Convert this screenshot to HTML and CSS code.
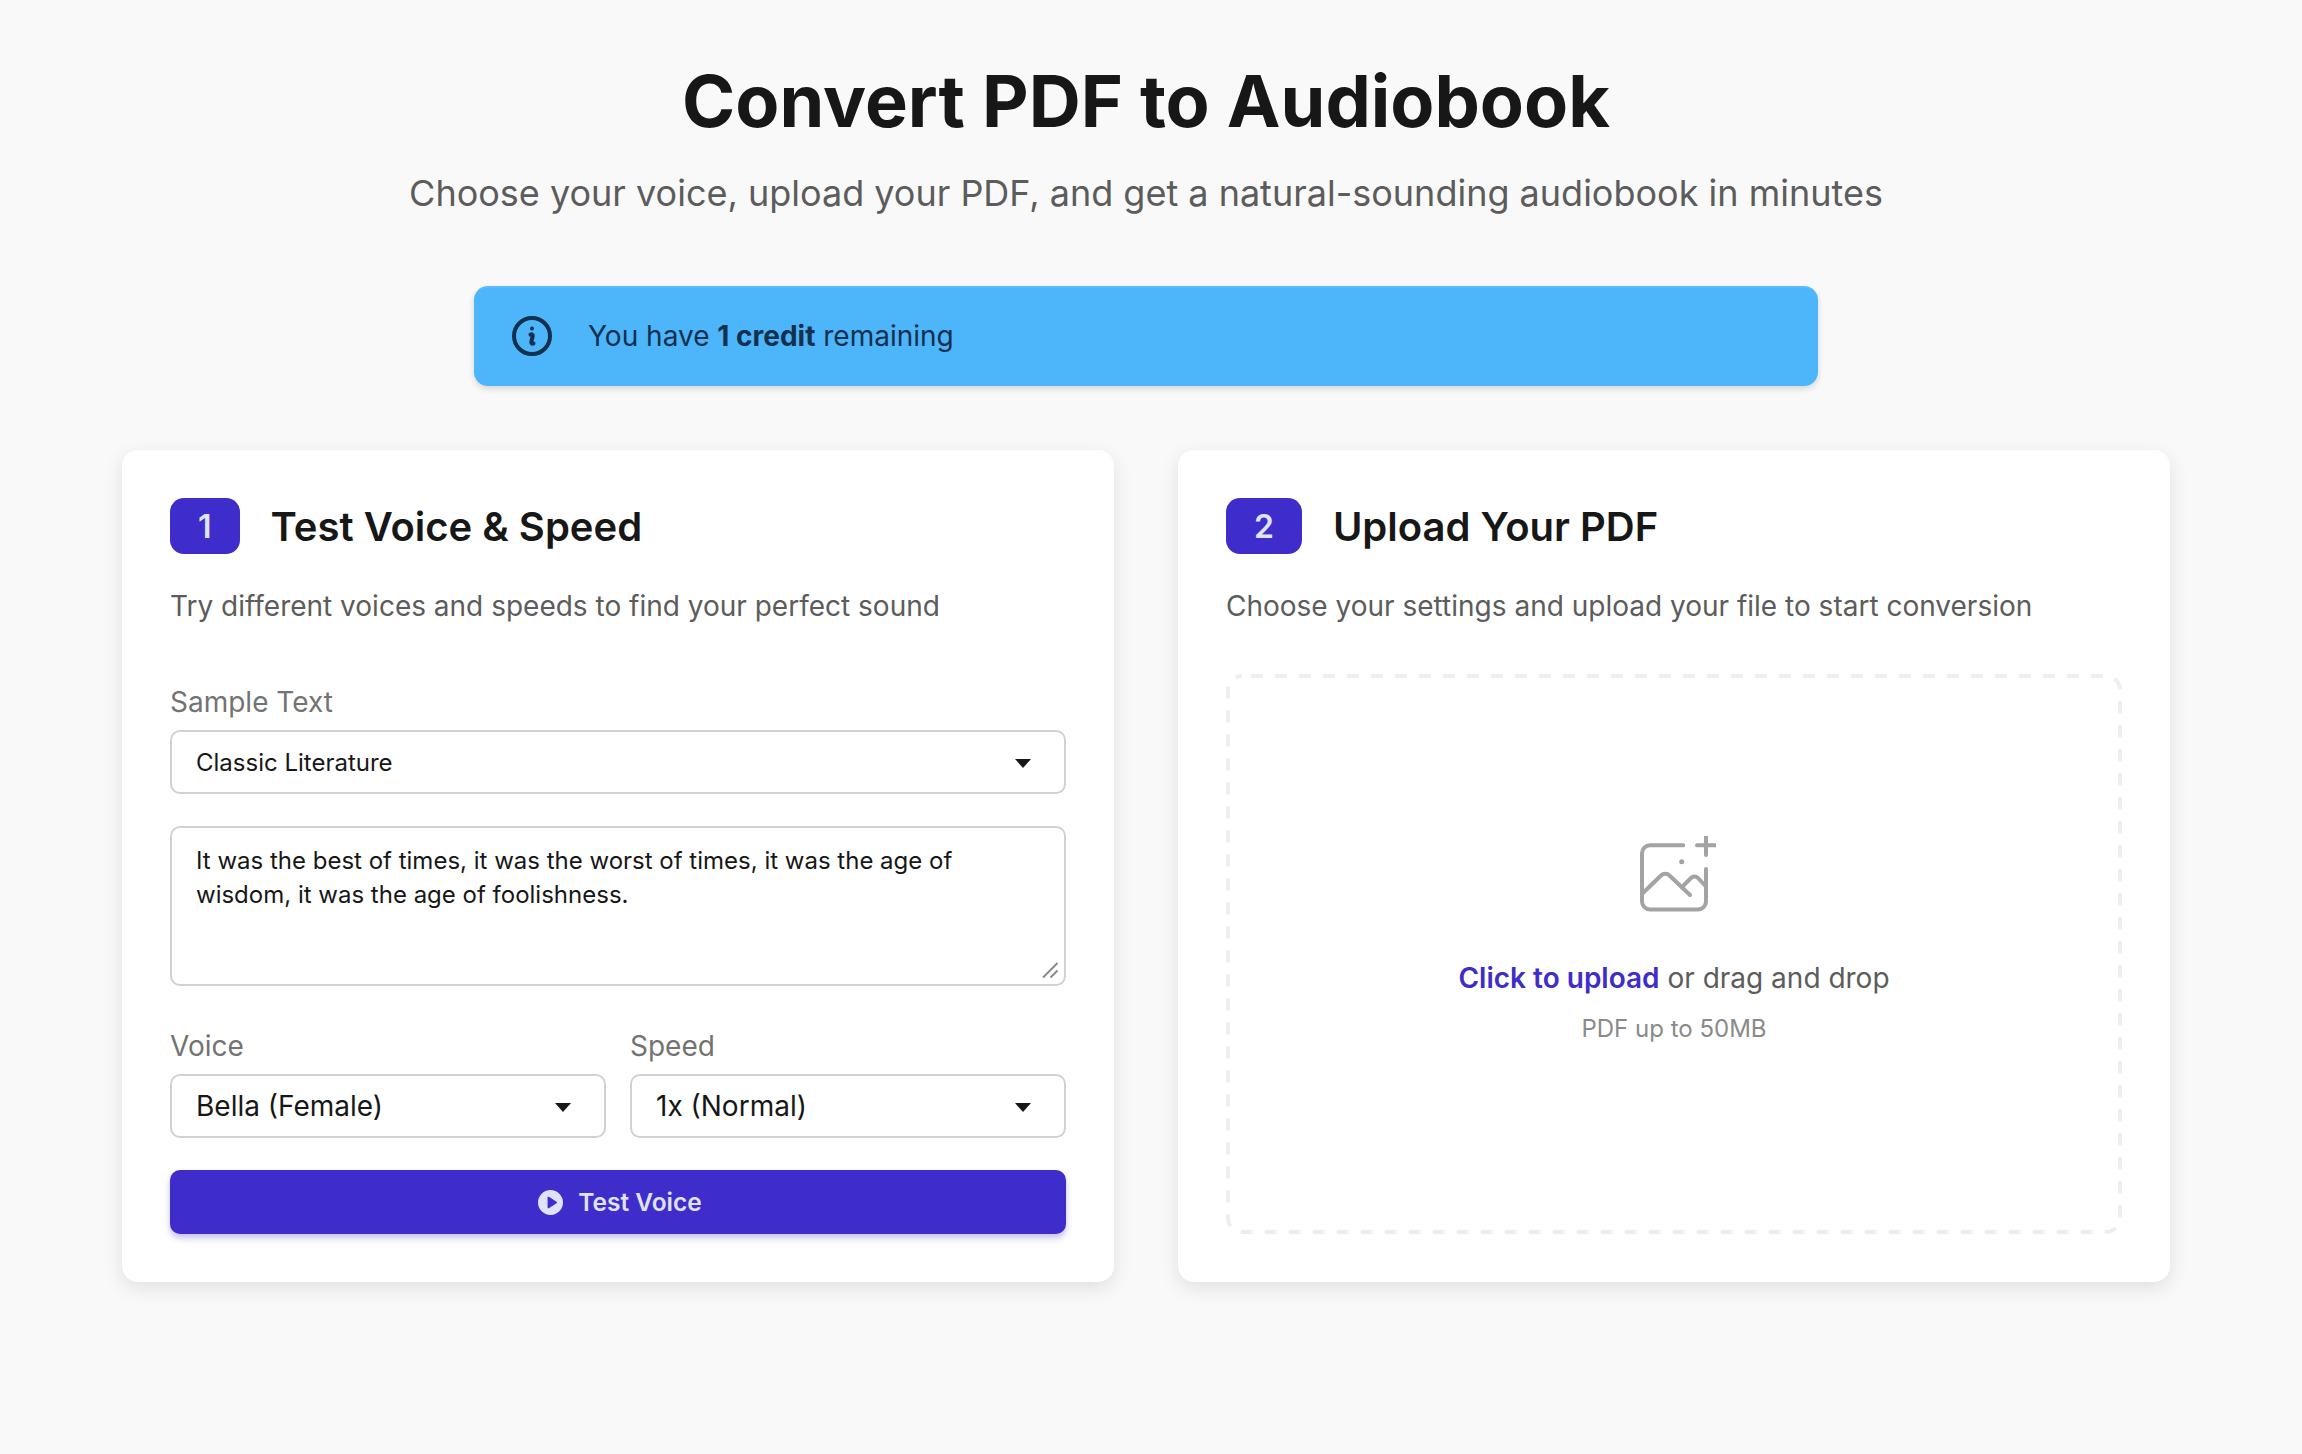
FILE: index.html
```html
<!DOCTYPE html>
<html lang="en">
<head>
    <meta charset="UTF-8">
    <meta name="viewport" content="width=device-width, initial-scale=1.0">
    <title>Convert PDF to Audiobook</title>
    <link rel="stylesheet" href="styles.css">
</head>
<body>
    <main class="page">
        <header class="hero">
            <h1>Convert PDF to Audiobook</h1>
            <p>Choose your voice, upload your PDF, and get a natural-sounding audiobook in minutes</p>
        </header>

        <div class="alert">
            <svg class="alert-icon" viewBox="0 0 24 24" fill="none" stroke="currentColor" stroke-width="2" stroke-linecap="round" stroke-linejoin="round">
                <path d="m11.25 11.25.041-.02a.75.75 0 0 1 1.063.852l-.708 2.836a.75.75 0 0 0 1.063.853l.041-.021M21 12a9 9 0 1 1-18 0 9 9 0 0 1 18 0Zm-9-3.75h.008v.008H12V8.25Z"/>
            </svg>
            <span>You have <strong>1 credit</strong> remaining</span>
        </div>

        <div class="columns">
            <section class="card">
                <div class="card-head">
                    <span class="badge">1</span>
                    <h2>Test Voice &amp; Speed</h2>
                </div>
                <p class="card-desc">Try different voices and speeds to find your perfect sound</p>

                <label class="field-label" for="sample">Sample Text</label>
                <div class="select-wrap">
                    <select id="sample" class="select select-small">
                        <option>Classic Literature</option>
                    </select>
                    <svg class="select-arrow" viewBox="0 0 16 9"><path d="M0 0h16L8 9z"/></svg>
                </div>
                <div class="textarea-wrap">
                    <textarea class="sample-text">It was the best of times, it was the worst of times, it was the age of wisdom, it was the age of foolishness.</textarea>
                    <svg class="grip" viewBox="0 0 16 16" fill="none" stroke="#8a8a8a" stroke-width="2"><path d="M1 15.500L15.500 1M8.500 15.500L15.500 8.500"/></svg>
                </div>

                <div class="field-row">
                    <div>
                        <label class="field-label" for="voice">Voice</label>
                        <div class="select-wrap">
                            <select id="voice" class="select">
                                <option>Bella (Female)</option>
                            </select>
                            <svg class="select-arrow" viewBox="0 0 16 9"><path d="M0 0h16L8 9z"/></svg>
                        </div>
                    </div>
                    <div>
                        <label class="field-label" for="speed">Speed</label>
                        <div class="select-wrap">
                            <select id="speed" class="select">
                                <option>1x (Normal)</option>
                            </select>
                            <svg class="select-arrow" viewBox="0 0 16 9"><path d="M0 0h16L8 9z"/></svg>
                        </div>
                    </div>
                </div>

                <button class="test-btn" type="button">
                    <svg class="play-icon" viewBox="0 0 24 24"><path fill-rule="evenodd" d="M12 0a12 12 0 1 1 0 24a12 12 0 0 1 0-24zM9.200 7.200v9.600a.8.8 0 0 0 1.200.7l7.400-4.800a.8.8 0 0 0 0-1.400l-7.400-4.800a.8.8 0 0 0-1.200.7z"/></svg>
                    Test Voice
                </button>
            </section>

            <section class="card">
                <div class="card-head">
                    <span class="badge">2</span>
                    <h2>Upload Your PDF</h2>
                </div>
                <p class="card-desc">Choose your settings and upload your file to start conversion</p>

                <div class="dropzone">
                    <!-- svg border: the browser's own dashed border has shorter dashes -->
                    <svg class="dropzone-border" viewBox="0 0 896 560" fill="none"><rect x="2" y="2" width="892" height="556" rx="14"/></svg>
                    <svg class="upload-icon" viewBox="0 0 76 76" fill="none" stroke="currentColor" stroke-width="4" stroke-linecap="round" stroke-linejoin="round">
                        <path d="M43.300 9.300H10a8 8 0 0 0-8 8V65.500a8 8 0 0 0 8 8H58a8 8 0 0 0 8-8V33"/>
                        <path d="M57 9.300H75M66 1V19"/>
                        <path d="M3 57L21 39.500a6 6 0 0 1 8.500 0L50 59"/>
                        <path d="M44 49l7-7a5 5 0 0 1 7 0L66 50.500"/>
                        <circle cx="41.700" cy="25.700" r="1.500" fill="currentColor" stroke-width="2"/>
                    </svg>
                    <p class="drop-text"><span class="drop-link">Click to upload</span> or drag and drop</p>
                    <p class="drop-hint">PDF up to 50MB</p>
                </div>
            </section>
        </div>
    </main>
</body>
</html>
```

FILE: styles.css
```css
* {
    box-sizing: border-box;
}
html, body {
    height: 100%;
}
body {
    font-family: Inter, "Liberation Sans", sans-serif;
    background-color: #f9f9f9;
    color: #171717;
    margin: 0;
    padding: 0 10px 0 0;
}
.page {
    width: 2048px;
    height: 100%;
    margin: 0 auto;
    padding-top: 56px;
}
.hero {
    text-align: center;
}
.hero h1 {
    margin: 0;
    font-size: 72px;
    line-height: 90px;
    font-weight: 700;
}
.hero p {
    margin: 20px 0 0;
    font-size: 36px;
    line-height: 54px;
    color: #5c5c5c;
}
.alert {
    display: flex;
    align-items: center;
    gap: 32px;
    width: 1344px;
    height: 100px;
    margin: 66px auto 0;
    padding: 0 34px;
    font-size: 28px;
    color: #13304e;
    background-color: #4db5fa;
    border-radius: 14px;
    box-shadow: inset 0 2px 0 rgba(255, 255, 255, 0.08), 0 3px 6px rgba(0, 0, 0, 0.14);
}
.alert-icon {
    width: 48px;
    height: 48px;
    flex: none;
}
.columns {
    display: grid;
    grid-template-columns: 992px 992px;
    gap: 64px;
    margin-top: 64px;
}
.card {
    height: 832px;
    padding: 48px;
    background-color: #ffffff;
    border-radius: 16px;
    box-shadow: 0 6px 20px rgba(0, 0, 0, 0.1);
}
.card-head {
    display: flex;
    align-items: center;
    gap: 31px;
    height: 56px;
}
.card-head h2 {
    margin: 0;
    font-size: 40px;
    font-weight: 600;
}
.badge {
    display: flex;
    align-items: center;
    justify-content: center;
    height: 56px;
    padding: 0 28px;
    font-size: 32px;
    font-weight: 600;
    color: #dfe3ff;
    background-color: #3f2dcb;
    border-radius: 14px;
}
.card-desc {
    margin: 32px 0 0;
    font-size: 28px;
    line-height: 40px;
    color: #5c5c5c;
}
.field-label {
    display: block;
    font-size: 28px;
    line-height: 40px;
    color: #737373;
}
.card-desc + .field-label {
    margin-top: 56px;
}
.select-wrap {
    position: relative;
    margin-top: 8px;
}
.select {
    display: block;
    width: 100%;
    height: 64px;
    padding: 0 64px 0 24px;
    font-family: inherit;
    font-size: 28px;
    color: #171717;
    background-color: #ffffff;
    border: 2px solid #d1d1d1;
    border-radius: 10px;
    appearance: none;
}
.select-small {
    font-size: 24px;
}
.select-arrow {
    position: absolute;
    top: 29px;
    right: 35px;
    width: 16px;
    height: 9px;
    fill: #171717;
}
.textarea-wrap {
    position: relative;
    margin-top: 32px;
}
.sample-text {
    display: block;
    width: 100%;
    height: 160px;
    padding: 16px 24px;
    font-family: inherit;
    font-size: 24px;
    line-height: 34px;
    color: #171717;
    background-color: #ffffff;
    border: 2px solid #d1d1d1;
    border-radius: 10px;
    resize: none;
}
.grip {
    position: absolute;
    right: 8px;
    bottom: 8px;
    width: 16px;
    height: 16px;
}
.field-row {
    display: grid;
    grid-template-columns: 1fr 1fr;
    gap: 24px;
    margin-top: 40px;
}
.test-btn {
    display: flex;
    align-items: center;
    justify-content: center;
    gap: 15px;
    width: 100%;
    height: 64px;
    margin-top: 32px;
    padding: 0 0 0 4px;
    font-family: inherit;
    font-size: 24.5px;
    font-weight: 600;
    color: #dfe3ff;
    background-color: #3f2dcb;
    border: none;
    border-radius: 10px;
    box-shadow: 0 4px 6px rgba(63, 45, 203, 0.3);
}
.play-icon {
    width: 25px;
    height: 25px;
    fill: currentColor;
}
.dropzone {
    position: relative;
    display: flex;
    flex-direction: column;
    align-items: center;
    height: 560px;
    margin-top: 48px;
    padding-top: 162px;
}
.dropzone-border {
    position: absolute;
    top: 0;
    left: 0;
    width: 896px;
    height: 560px;
    stroke: #eeeeee;
    stroke-width: 4;
    stroke-dasharray: 12 12;
    stroke-dashoffset: 15;
}
.upload-icon {
    width: 76px;
    height: 76px;
    margin-left: 8px;
    color: #a3a3a3;
}
.drop-text {
    margin: 46px 0 0;
    font-size: 28px;
    line-height: 40px;
    color: #5c5c5c;
}
.drop-link {
    font-weight: 600;
    color: #3f2dcb;
}
.drop-hint {
    margin: 14px 0 0;
    font-size: 24px;
    line-height: 34px;
    color: #8a8a8a;
}
```
